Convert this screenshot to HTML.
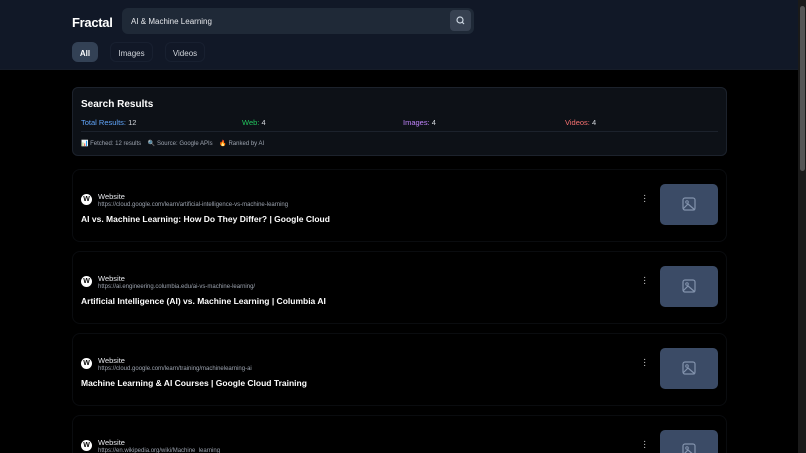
<!DOCTYPE html>
<html style="width:806px;height:453px;overflow:hidden"><head><meta charset="utf-8"><style>
*{box-sizing:border-box;margin:0;padding:0}
body{width:806px;height:453px;overflow:hidden;background:#000;font-family:"Liberation Sans",sans-serif;color:#fff;position:relative}
.hdr{position:absolute;left:0;top:0;width:798px;height:70px;background:#111827;border-bottom:1px solid #161c28}
.logo{position:absolute;left:72px;top:15px;font-size:13px;font-weight:bold;letter-spacing:-0.3px}
.search{position:absolute;left:122px;top:8px;width:352px;height:26px;background:#1f2937;border-radius:6px;font-size:8px;padding:9px 0 0 9px;color:#e5e7eb}
.sbtn{position:absolute;right:3px;top:2px;width:21px;height:21px;background:#374151;border-radius:4px}
.tab{position:absolute;top:42px;height:20px;border-radius:6px;font-size:8px;padding-top:6px;text-align:center;color:#d1d5db;border:1px solid #182030}
.sb{position:absolute;left:798px;top:0;width:8px;height:453px;background:#1a1a1a}
.thumbsb{position:absolute;left:800px;top:6px;width:5px;height:165px;background:#555;border-radius:3px}
.sum{position:absolute;left:72px;top:87px;width:655px;height:69px;background:#0d1117;border:1px solid #1c222c;border-radius:6px}
.card{position:absolute;left:72px;width:655px;height:73px;border:1px solid #0a0c0f;border-radius:8px;background:#000;overflow:hidden}
.w{position:absolute;left:8px;top:24px;width:11px;height:11px;border-radius:50%;background:#fff;color:#000;font-size:7px;font-weight:bold;text-align:center;line-height:11px}
.lbl{position:absolute;left:25px;top:22px;font-size:7.5px;color:#e5e7eb}
.url{position:absolute;left:25px;top:32px;font-size:6px;color:#9ca3af}
.ttl{position:absolute;left:8px;top:44px;font-size:8.5px;font-weight:bold;color:#fff}
.dots{position:absolute;left:570px;top:24px;font-size:10px;color:#ccc;line-height:3px;width:4px}
.th{position:absolute;left:587px;top:14px;width:58px;height:41px;background:#3b4b66;border-radius:5px}
</style></head><body>
<div class="hdr">
<div class="logo">Fractal</div>
<div class="search">AI &amp; Machine Learning<div class="sbtn"><svg width="21" height="21" viewBox="0 0 21 21"><circle cx="10" cy="10" r="3" fill="none" stroke="#cbd5e1" stroke-width="1.2"/><line x1="12.2" y1="12.2" x2="14" y2="14" stroke="#cbd5e1" stroke-width="1.2"/></svg></div></div>
<div class="tab" style="left:72px;width:26px;background:#334155;color:#fff;border-color:#334155;font-weight:bold">All</div>
<div class="tab" style="left:110px;width:43px">Images</div>
<div class="tab" style="left:165px;width:40px">Videos</div>
</div>
<div class="sum">
<div style="position:absolute;left:8px;top:11px;font-size:10px;font-weight:bold">Search Results</div>
<div style="position:absolute;left:8px;top:30px;font-size:7.5px;color:#d1d5db;width:640px"><span style="color:#60a5fa">Total Results:</span> 12
<span style="position:absolute;left:161px;top:0"><span style="color:#22c55e">Web:</span> 4</span>
<span style="position:absolute;left:322px;top:0"><span style="color:#c084fc">Images:</span> 4</span>
<span style="position:absolute;left:484px;top:0"><span style="color:#f87171">Videos:</span> 4</span></div>
<div style="position:absolute;left:8px;top:43px;width:637px;border-top:1px solid #1c222c"></div>
<div style="position:absolute;left:8px;top:52px;font-size:6px;color:#9ca3af">📊 Fetched: 12 results &nbsp;&nbsp; 🔍 Source: Google APIs &nbsp;&nbsp; 🔥 Ranked by AI</div>
</div>
<div class="card" style="top:169px"><div class="w">W</div><div class="lbl">Website</div><div class="url">https://cloud.google.com/learn/artificial-intelligence-vs-machine-learning</div><div class="ttl">AI vs. Machine Learning: How Do They Differ? | Google Cloud</div><div class="dots">·<br>·<br>·</div><div class="th"><svg width="58" height="41"><rect x="23" y="14" width="12" height="12" rx="2" fill="none" stroke="#8393ad" stroke-width="1.2"/><circle cx="27" cy="18" r="1.3" fill="none" stroke="#8393ad"/><path d="M23 25l5-5 7 6" fill="none" stroke="#8393ad" stroke-width="1.2"/></svg></div></div>
<div class="card" style="top:251px"><div class="w">W</div><div class="lbl">Website</div><div class="url">https://ai.engineering.columbia.edu/ai-vs-machine-learning/</div><div class="ttl">Artificial Intelligence (AI) vs. Machine Learning | Columbia AI</div><div class="dots">·<br>·<br>·</div><div class="th"><svg width="58" height="41"><rect x="23" y="14" width="12" height="12" rx="2" fill="none" stroke="#8393ad" stroke-width="1.2"/><circle cx="27" cy="18" r="1.3" fill="none" stroke="#8393ad"/><path d="M23 25l5-5 7 6" fill="none" stroke="#8393ad" stroke-width="1.2"/></svg></div></div>
<div class="card" style="top:333px"><div class="w">W</div><div class="lbl">Website</div><div class="url">https://cloud.google.com/learn/training/machinelearning-ai</div><div class="ttl">Machine Learning &amp; AI Courses | Google Cloud Training</div><div class="dots">·<br>·<br>·</div><div class="th"><svg width="58" height="41"><rect x="23" y="14" width="12" height="12" rx="2" fill="none" stroke="#8393ad" stroke-width="1.2"/><circle cx="27" cy="18" r="1.3" fill="none" stroke="#8393ad"/><path d="M23 25l5-5 7 6" fill="none" stroke="#8393ad" stroke-width="1.2"/></svg></div></div>
<div class="card" style="top:415px;height:38px;border-bottom:none;border-radius:8px 8px 0 0"><div class="w">W</div><div class="lbl">Website</div><div class="url">https://en.wikipedia.org/wiki/Machine_learning</div><div class="dots">·<br>·<br>·</div><div class="th"><svg width="58" height="41"><rect x="23" y="14" width="12" height="12" rx="2" fill="none" stroke="#8393ad" stroke-width="1.2"/><circle cx="27" cy="18" r="1.3" fill="none" stroke="#8393ad"/><path d="M23 25l5-5 7 6" fill="none" stroke="#8393ad" stroke-width="1.2"/></svg></div></div>
<div class="sb"></div><div class="thumbsb"></div>
</body></html>
